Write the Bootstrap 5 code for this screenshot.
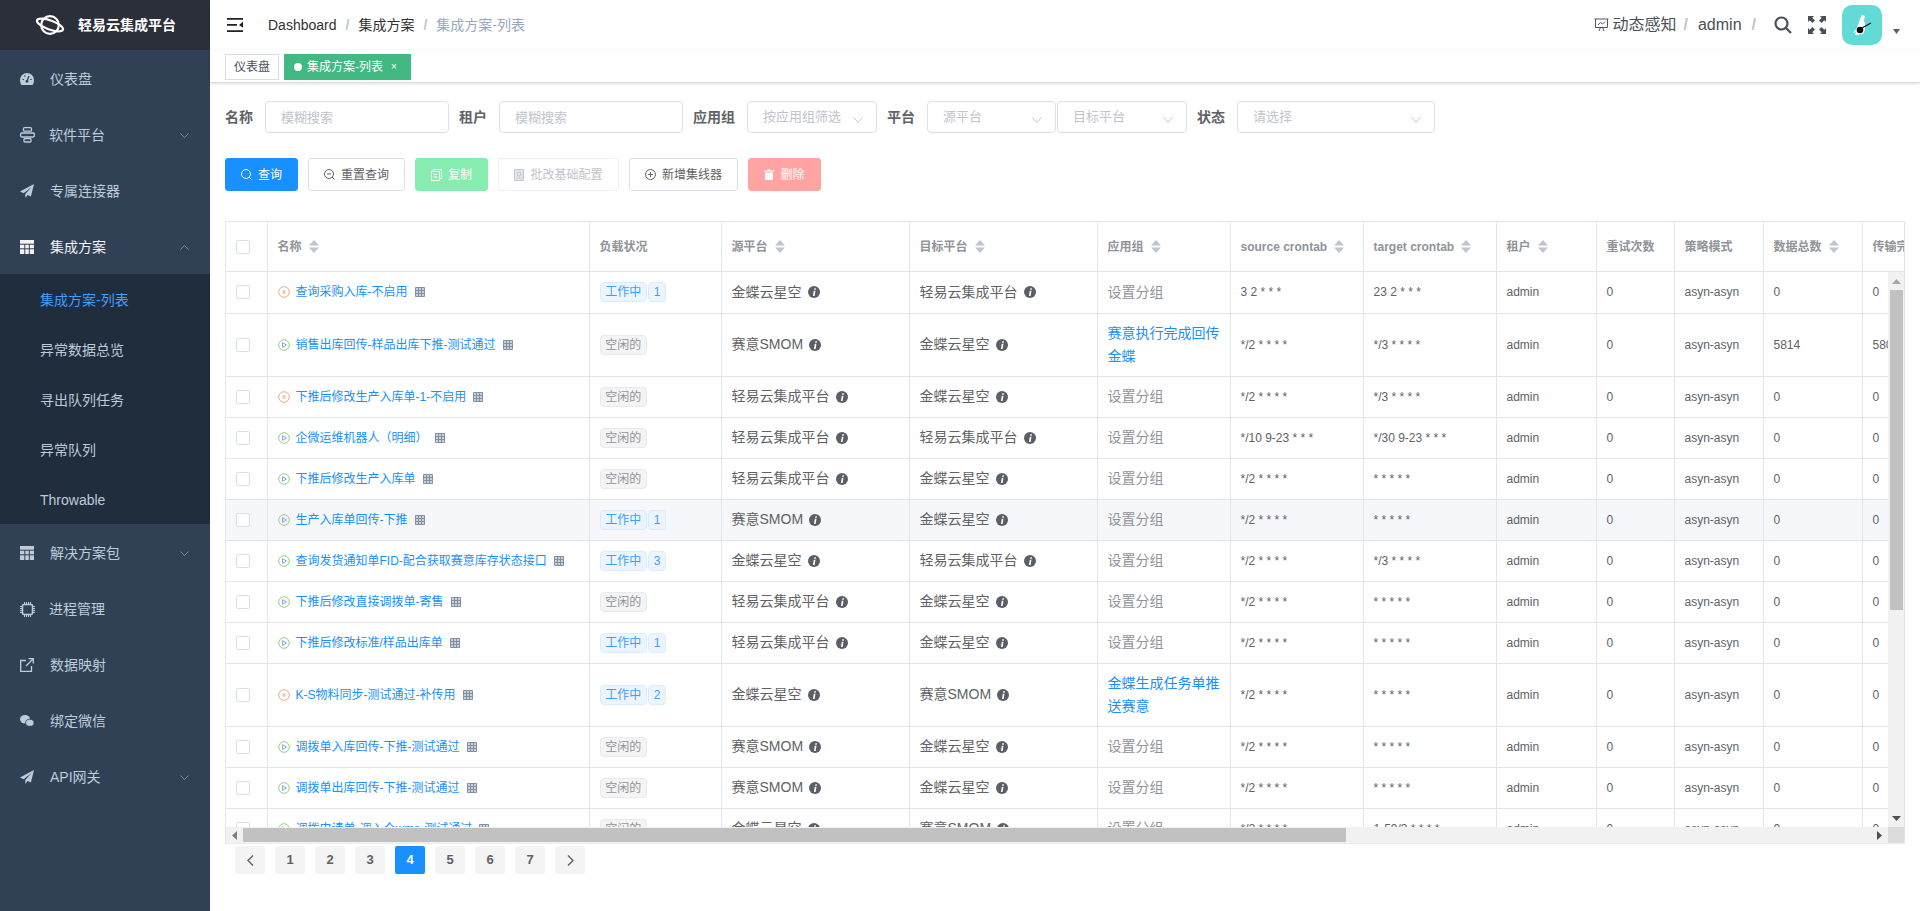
<!DOCTYPE html>
<html lang="zh-CN">
<head>
<meta charset="utf-8">
<title>集成方案-列表</title>
<link rel="stylesheet" href="https://cdn.jsdelivr.net/npm/bootstrap@5.3.0/dist/css/bootstrap.min.css">
<style>
html,body{height:911px;overflow:hidden}
body{font-family:"Liberation Sans","Noto Sans CJK SC",sans-serif;font-size:14px;color:#606266;background:#fff}
svg{display:block;flex:none}
.side-nav{width:210px;height:911px;background:#304156;color:#bfcbd9;flex:none}
.brand-bar{height:50px;background:#2b2f3a;color:#fff;font-weight:700;padding-left:35px;gap:13px}
.side-link{height:56px;padding:2px 21px 0 20px;color:#bfcbd9;gap:16px;text-decoration:none;font-size:14px}
.side-link.on{color:#f4f4f5}
.side-link.tight{gap:14px}
.side-link .ms-auto{color:#8391a3}
.side-sub{background:#1f2d3d}
.side-sublink{height:50px;padding:2px 0 0 40px;color:#bfcbd9;font-size:14px;text-decoration:none}
.side-sublink.on{color:#409eff}
.top-bar{height:50px;padding:0 20px 0 17px;background:#fff;box-shadow:0 1px 4px rgba(0,21,41,.06);position:relative}
.crumbs{--bs-breadcrumb-margin-bottom:0;--bs-breadcrumb-divider-color:#c0c4cc;--bs-breadcrumb-item-active-color:#97a8be;--bs-breadcrumb-item-padding-x:9px;margin-left:25px;font-size:14px}
.crumbs .breadcrumb-item{color:#303133}
.crumbs .breadcrumb-item.active{color:#97a8be}
.crumbs .breadcrumb-item+.breadcrumb-item::before{font-weight:700}
.top-text{font-size:16px;color:#4a4f57}
.top-sep{font-size:16px;color:#c0c4cc;font-weight:700;margin:0 10px}
.top-sep.near{margin-left:7px}
.avatar-box{width:40px;height:40px;border-radius:10px;background:#62dbd6;margin-left:16px}
.tab-bar{height:33px;padding:4px 15px 0;gap:5px;background:#fff;border-bottom:1px solid #d8dce5;box-shadow:0 1px 3px rgba(0,0,0,.12);align-items:flex-start;position:relative}
.view-tab{height:26px;font-size:12px;border:1px solid #d8dce5;color:#495060;padding:0 8px;background:#fff}
.view-tab.on{background:#42b983;border-color:#42b983;color:#fff;width:127px;padding:0}
.tab-dot{width:8px;height:8px;border-radius:50%;background:#fff;margin:0 5px 0 9px}
.tab-x{font-size:10px;margin-left:8px;line-height:1}
.filter-row{padding:18px 15px 0 15px}
.field-label{font-size:14px;font-weight:700;color:#606266;margin-right:12px;white-space:nowrap}
.field-box{height:32px;font-size:13px;border:1px solid #dcdfe6;border-radius:4px;padding:0 30px 0 15px;margin-right:10px;color:#c0c4cc;box-shadow:none;background-color:#fff;flex:none}
.field-box::placeholder{color:#c0c4cc}
select.field-box{background-image:url("data:image/svg+xml,%3Csvg xmlns='http://www.w3.org/2000/svg' width='10' height='6' viewBox='0 0 10 6'%3E%3Cpath d='M.5.5 5 5.3 9.5.5' fill='none' stroke='%23c0c4cc'/%3E%3C/svg%3E");background-repeat:no-repeat;background-position:right 13px top 15px;background-size:10px 6px}
.w-a{width:184px}.w-b{width:130px}.w-c{width:198px}
.field-box.w-tight{width:129px;margin-right:1px}
.action-row{padding:25px 15px 0;gap:10px}
.act-btn{height:33px;font-size:12px;padding:0;border-radius:3px;gap:6px;border:1px solid #dcdfe6;background:#fff;color:#606266;flex:none}
.act-btn:hover{border-color:#dcdfe6;color:#606266;background:#fff}
.act-blue{width:73px;background:#1890ff;border-color:#1890ff;color:#fff}
.act-blue:hover{background:#1890ff;border-color:#1890ff;color:#fff}
.act-reset{width:97px}
.act-green{width:73px;background:#87ecb0;border-color:#87ecb0;color:#fff}
.act-green:hover{background:#87ecb0;border-color:#87ecb0;color:#fff}
.act-off{width:121px;color:#c0c4cc;border-color:#ebeef5}
.act-off:hover{color:#c0c4cc;border-color:#ebeef5}
.act-new{width:109px}
.act-red{width:73px;background:#ffa3a3;border-color:#ffa3a3;color:#fff}
.act-red:hover{background:#ffa3a3;border-color:#ffa3a3;color:#fff}
.grid-shell{margin:30px 15px 0;width:1680px;border:1px solid #dfe6ec;border-bottom-color:#e8ebef}
.grid-head{height:50px;overflow:hidden;border-bottom:1px solid #dfe6ec}
.grid-body{width:1662px;height:555px;overflow:hidden;flex:none}
.data-grid{table-layout:fixed;width:1782px;border-collapse:collapse;margin:0;--bs-table-bg:transparent;--bs-table-border-color:#dfe6ec;font-size:12px;color:#606266}
.data-grid th,.data-grid td{padding:0 10px;border:1px solid #dfe6ec;vertical-align:middle;white-space:nowrap;overflow:hidden;color:#606266}
.data-grid tr>:first-child{border-left:0;padding:0}
.data-grid th{height:49px;border-top:0;border-bottom:0;color:#909399;font-weight:700;font-size:12px}
.data-grid td{height:41.05px}
.data-grid tr.tall td{height:63px}
.data-grid tr:first-child td{border-top:0}
.data-grid tr.hot td{background:#f5f7fa}
.sort-wrap{gap:7px}
.check-box{width:14px;height:14px;border:1px solid #dcdfe6;border-radius:2px;background:#fff;margin-left:10px}
.name-link{color:#1890ff;gap:6px;text-decoration:none}
.name-link svg:last-child{margin-left:1px}
.state-chip{font-size:12px;font-weight:400;line-height:18px;height:20px;padding:0 4.75px;border-radius:4px;border:1px solid #d9ecff;background:#ecf5ff;color:#409eff;margin-right:1px}
.state-idle{background:#f4f4f5;border-color:#e9e9eb;color:#909399}
.cell-plat{font-size:14px;gap:6px}
.cell-group{font-size:14px;color:#909399!important}
.cell-group a{color:#1890ff;text-decoration:none;display:block;white-space:normal;line-height:23px}
.v-track{width:16px;height:555px;background:#f1f1f1;flex:none;padding:7px 0 6px}
.v-thumb{width:13px;height:320px;background:#c1c1c1;margin:6px 0 0 2px}
.h-track{height:16px;background:#f1f1f1}
.h-thumb{width:1103px;height:14px;background:#c1c1c1;margin-left:6px}
.h-corner{width:16px;height:16px;background:#dcdcdc}
.pager{--bs-pagination-border-width:0;margin:2px 0 0 25px;gap:10px}
.pager .page-link{width:30px;height:28px;padding:0;margin-left:0!important;background:#f4f4f5;color:#606266;font-size:13px;font-weight:700;border-radius:2px!important;display:flex;align-items:center;justify-content:center}
.pager .page-item.active .page-link{background:#1890ff;color:#fff}
</style>
</head>
<body class="d-flex">
<svg width="0" height="0" class="position-absolute">
<defs>
<symbol id="i-info" viewBox="0 0 12 12"><circle cx="6" cy="6" r="6" fill="#5a5e66"/><path d="M6.4 2.2h1.6l-.3 1.5H6.1zM5.8 4.8h1.7L6.6 9.9H4.9z" fill="#fff"/></symbol>
<symbol id="i-play" viewBox="0 0 12 12"><circle cx="6" cy="6" r="5.3" fill="none" stroke="#95ce7f"/><path d="M4.6 3.6 8.4 6 4.6 8.4z" fill="none" stroke="#7fa7d9"/></symbol>
<symbol id="i-stop" viewBox="0 0 12 12"><circle cx="6" cy="6" r="5.3" fill="none" stroke="#eda98a"/><path d="M4.5 4.2h3v3.6h-3z" fill="#f5c4ad"/></symbol>
<symbol id="i-grid" viewBox="0 0 10 10"><path d="M.5.5h9v9h-9zM.5 3.500h9M.5 6.500h9M3.500.5v9M6.500.5v9" fill="#c9d2dc" stroke="#8290a2"/></symbol>
<symbol id="i-sort" viewBox="0 0 10 13"><path d="M5 0l5 5.500H0zM0 7.500h10L5 13z" fill="#c0c4cc"/></symbol>
<symbol id="i-table" viewBox="0 0 14 14"><path d="M0 0h14v14H0z" fill="currentColor"/><path d="M0 4.200h14M0 8.800h14M4.800 4v10M9.300 4v10" stroke="#304156" fill="none"/></symbol>
<symbol id="i-plane" viewBox="0 0 14 14"><path d="M14 0 0 7.600l3.600 1.600L11.600 3 5.300 10v4l2.300-3 3.300 1.500z" fill="currentColor"/></symbol>
<symbol id="i-down" viewBox="0 0 9 5"><path d="M.4.4 4.500 4.500 8.600.4" fill="none" stroke="currentColor" stroke-width=".9"/></symbol>
<symbol id="i-up" viewBox="0 0 9 5"><path d="M.4 4.600 4.500.5l4.100 4.100" fill="none" stroke="currentColor" stroke-width=".9"/></symbol>
</defs>
</svg>

<aside class="side-nav">
  <div class="brand-bar d-flex align-items-center">
    <svg width="30" height="20" viewBox="0 0 30 20" fill="none" stroke="#fff" stroke-width="2.200"><circle cx="15" cy="10" r="8.800"/><ellipse cx="15" cy="10" rx="13.800" ry="4.500" transform="rotate(20 15 10)"/></svg>
    <span>轻易云集成平台</span>
  </div>
  <nav class="nav flex-column flex-nowrap">
    <a class="side-link d-flex align-items-center" href="#"><svg width="14" height="12" viewBox="0 0 14 12"><path d="M7 0a7 7 0 0 0-7 7c0 2 .6 3.600 1.500 5h11c.9-1.400 1.500-3 1.500-5a7 7 0 0 0-7-7z" fill="currentColor"/><path d="M7 8 9 3M2.500 6.500h1.500M10.200 6.500h1.500M4.500 2.500l.8 1.200" stroke="#304156" stroke-width="1.200"/><circle cx="7" cy="8.300" r="1.400" fill="#304156"/></svg><span>仪表盘</span></a>
    <a class="side-link tight d-flex align-items-center" href="#"><svg width="15" height="16" viewBox="0 0 15 16" fill="none" stroke="currentColor" stroke-width="1.300"><rect x="3.500" y=".7" width="8" height="3.500" rx="1"/><path d="M2 6h11c2 0 2 4 0 4H2c-2 0-2-4 0-4z"/><rect x="4" y="11.500" width="7" height="3.500" rx="1"/></svg><span>软件平台</span><svg class="ms-auto" width="9" height="5"><use href="#i-down"/></svg></a>
    <a class="side-link d-flex align-items-center" href="#"><svg width="14" height="14"><use href="#i-plane"/></svg><span>专属连接器</span></a>
    <a class="side-link on d-flex align-items-center" href="#"><svg width="14" height="14"><use href="#i-table"/></svg><span>集成方案</span><svg class="ms-auto" width="9" height="5"><use href="#i-up"/></svg></a>
    <div class="side-sub">
      <a class="side-sublink on d-flex align-items-center" href="#">集成方案-列表</a>
      <a class="side-sublink d-flex align-items-center" href="#">异常数据总览</a>
      <a class="side-sublink d-flex align-items-center" href="#">寻出队列任务</a>
      <a class="side-sublink d-flex align-items-center" href="#">异常队列</a>
      <a class="side-sublink d-flex align-items-center" href="#">Throwable</a>
    </div>
    <a class="side-link d-flex align-items-center" href="#"><svg width="14" height="14"><use href="#i-table"/></svg><span>解决方案包</span><svg class="ms-auto" width="9" height="5"><use href="#i-down"/></svg></a>
    <a class="side-link tight d-flex align-items-center" href="#"><svg width="15" height="15" viewBox="0 0 15 15" fill="none" stroke="currentColor"><rect x="2.500" y="2.500" width="10" height="10" rx="1.500" stroke-width="1.500"/><path d="M4.500 0v2M6.500 0v2M8.500 0v2M10.500 0v2M4.500 13v2M6.500 13v2M8.500 13v2M10.500 13v2M0 4.500h2M0 6.500h2M0 8.500h2M0 10.500h2M13 4.500h2M13 6.500h2M13 8.500h2M13 10.500h2"/></svg><span>进程管理</span></a>
    <a class="side-link d-flex align-items-center" href="#"><svg width="14" height="14" viewBox="0 0 14 14" fill="none" stroke="currentColor" stroke-width="1.300"><path d="M6 2.500H.7v10.800h10.800V8M6 8l7-7M8.500.7h4.800v4.800"/></svg><span>数据映射</span></a>
    <a class="side-link d-flex align-items-center" href="#"><svg width="14" height="12" viewBox="0 0 14 12" fill="currentColor"><ellipse cx="5" cy="4.300" rx="5" ry="4.200"/><ellipse cx="9.800" cy="7.800" rx="4.200" ry="3.500" stroke="#304156" stroke-width=".8"/></svg><span>绑定微信</span></a>
    <a class="side-link d-flex align-items-center" href="#"><svg width="14" height="14"><use href="#i-plane"/></svg><span>API网关</span><svg class="ms-auto" width="9" height="5"><use href="#i-down"/></svg></a>
  </nav>
</aside>

<main class="flex-grow-1" style="min-width:0">
  <header class="top-bar navbar flex-nowrap justify-content-start">
    <svg width="16" height="14" viewBox="0 0 16 14" fill="#222"><path d="M0 0h16v1.700H0zM0 12.300h16V14H0zM0 6h10v1.700H0zM16 3.800v6L12 6.900z"/></svg>
    <ol class="breadcrumb crumbs">
      <li class="breadcrumb-item">Dashboard</li>
      <li class="breadcrumb-item">集成方案</li>
      <li class="breadcrumb-item active">集成方案-列表</li>
    </ol>
    <div class="ms-auto d-flex align-items-center">
      <svg width="15" height="14" viewBox="0 0 15 14" fill="none" stroke="#555" class="me-1"><path d="M.5 1h14M1.500 1v8.500h12V1M5 13l1.500-3.500M10 13 8.500 9.500M4 7l2.500-2.500L8.500 6 11 3.500"/></svg>
      <span class="top-text">动态感知</span><span class="top-sep near">/</span><span class="top-text">admin</span><span class="top-sep">/</span>
      <svg width="18" height="18" viewBox="0 0 18 18" fill="none" stroke="#4a4f57" stroke-width="2.200" class="ms-2"><circle cx="7.500" cy="7.500" r="6"/><path d="m12 12 5 5"/></svg>
      <svg width="18" height="18" viewBox="0 0 18 18" fill="#4a4f57" style="margin-left:16px"><path d="M0 0h6L4.300 1.700 7 4.400 4.400 7 1.700 4.300 0 6zM18 0v6l-1.700-1.700L13.600 7 11 4.400l2.700-2.700L12 0zM0 18v-6l1.700 1.700L4.400 11 7 13.600l-2.700 2.700L6 18zM18 18h-6l1.700-1.700L11 13.600l2.600-2.600 2.700 2.700L18 12z"/></svg>
      <div class="avatar-box">
        <svg width="40" height="40" viewBox="0 0 40 40"><path d="M20 10l3 1-1 5c2 5 1 10-1 13l-8 1 1-3-3 1c4-4 6-10 7-14z" fill="#fff"/><circle cx="18" cy="25" r="3.300" fill="#111"/><path d="M20 23l9-5" stroke="#111" stroke-width="1.100"/></svg>
      </div>
      <svg width="7" height="5" viewBox="0 0 7 5" fill="#5a5e66" style="margin:13px 0 0 11px"><path d="M0 0h7L3.500 5z"/></svg>
    </div>
  </header>

  <div class="tab-bar d-flex">
    <div class="view-tab d-flex align-items-center">仪表盘</div>
    <div class="view-tab on d-flex align-items-center"><span class="tab-dot"></span>集成方案-列表<span class="tab-x">×</span></div>
  </div>

  <form class="filter-row d-flex align-items-center">
    <label class="field-label">名称</label><input class="form-control field-box w-a" placeholder="模糊搜索">
    <label class="field-label">租户</label><input class="form-control field-box w-a" placeholder="模糊搜索">
    <label class="field-label">应用组</label><select class="form-select field-box w-b"><option>按应用组筛选</option></select>
    <label class="field-label">平台</label><select class="form-select field-box w-tight"><option>源平台</option></select><select class="form-select field-box w-b"><option>目标平台</option></select>
    <label class="field-label">状态</label><select class="form-select field-box w-c"><option>请选择</option></select>
  </form>

  <div class="action-row d-flex">
    <button class="btn act-btn act-blue d-flex align-items-center justify-content-center"><svg width="11" height="11" viewBox="0 0 11 11" fill="none" stroke="#fff"><circle cx="5" cy="5" r="4.500"/><path d="m8 8 2.500 2.500"/></svg>查询</button>
    <button class="btn act-btn act-reset d-flex align-items-center justify-content-center"><svg width="11" height="11" viewBox="0 0 11 11" fill="none" stroke="#606266"><circle cx="5" cy="5" r="4.500"/><path d="m8 8 2.500 2.500M3 5h4"/></svg>重置查询</button>
    <button class="btn act-btn act-green d-flex align-items-center justify-content-center"><svg width="11" height="12" viewBox="0 0 11 12" fill="none" stroke="#fff"><path d="M2.500 2.500V.5h8v9h-2M.5 2.500h8v9h-8zM2.500 5.500h4M2.500 8h4"/></svg>复制</button>
    <button class="btn act-btn act-off d-flex align-items-center justify-content-center"><svg width="10" height="12" viewBox="0 0 10 12" fill="#e4e7ed" stroke="#c0c4cc"><path d="M.5.500h9v11h-9z"/><circle cx="5" cy="5" r="2"/><path d="M2.500 9h5"/></svg>批改基础配置</button>
    <button class="btn act-btn act-new d-flex align-items-center justify-content-center"><svg width="11" height="11" viewBox="0 0 11 11" fill="none" stroke="#606266"><circle cx="5.500" cy="5.500" r="5"/><path d="M5.500 3v5M3 5.500h5"/></svg>新增集线器</button>
    <button class="btn act-btn act-red d-flex align-items-center justify-content-center"><svg width="10" height="11" viewBox="0 0 10 11" fill="#fff"><path d="M0 1.500h3.500V.5h3v1H10v1H0zM1 3.500h8V11H1z"/></svg>删除</button>
  </div>

  <div class="grid-shell">
    <div class="grid-head">
      <table class="table data-grid">
        <colgroup><col style="width:41px"><col style="width:322px"><col style="width:132px"><col style="width:188px"><col style="width:188px"><col style="width:133px"><col style="width:133px"><col style="width:133px"><col style="width:100px"><col style="width:78px"><col style="width:89px"><col style="width:99px"><col style="width:146px"></colgroup>
        <thead><tr>
          <th><div class="check-box"></div></th>
          <th><div class="sort-wrap d-flex align-items-center">名称<svg width="10" height="13"><use href="#i-sort"/></svg></div></th>
          <th>负载状况</th>
          <th><div class="sort-wrap d-flex align-items-center">源平台<svg width="10" height="13"><use href="#i-sort"/></svg></div></th>
          <th><div class="sort-wrap d-flex align-items-center">目标平台<svg width="10" height="13"><use href="#i-sort"/></svg></div></th>
          <th><div class="sort-wrap d-flex align-items-center">应用组<svg width="10" height="13"><use href="#i-sort"/></svg></div></th>
          <th><div class="sort-wrap d-flex align-items-center">source crontab<svg width="10" height="13"><use href="#i-sort"/></svg></div></th>
          <th><div class="sort-wrap d-flex align-items-center">target crontab<svg width="10" height="13"><use href="#i-sort"/></svg></div></th>
          <th><div class="sort-wrap d-flex align-items-center">租户<svg width="10" height="13"><use href="#i-sort"/></svg></div></th>
          <th>重试次数</th>
          <th>策略模式</th>
          <th><div class="sort-wrap d-flex align-items-center">数据总数<svg width="10" height="13"><use href="#i-sort"/></svg></div></th>
          <th>传输完成数</th>
        </tr></thead>
      </table>
    </div>
    <div class="d-flex">
      <div class="grid-body">
        <table class="table data-grid">
          <colgroup><col style="width:41px"><col style="width:322px"><col style="width:132px"><col style="width:188px"><col style="width:188px"><col style="width:133px"><col style="width:133px"><col style="width:133px"><col style="width:100px"><col style="width:78px"><col style="width:89px"><col style="width:99px"><col style="width:146px"></colgroup>
          <tbody>
            <tr><td><div class="check-box"></div></td><td><a class="name-link d-flex align-items-center" href="#"><svg width="12" height="12"><use href="#i-stop"/></svg>查询采购入库-不启用<svg width="10" height="10"><use href="#i-grid"/></svg></a></td><td><span class="badge state-chip">工作中</span><span class="badge state-chip">1</span></td><td><div class="cell-plat d-flex align-items-center">金蝶云星空<svg width="12" height="12"><use href="#i-info"/></svg></div></td><td><div class="cell-plat d-flex align-items-center">轻易云集成平台<svg width="12" height="12"><use href="#i-info"/></svg></div></td><td class="cell-group">设置分组</td><td>3 2 * * *</td><td>23 2 * * *</td><td>admin</td><td>0</td><td>asyn-asyn</td><td>0</td><td>0</td></tr>
            <tr class="tall"><td><div class="check-box"></div></td><td><a class="name-link d-flex align-items-center" href="#"><svg width="12" height="12"><use href="#i-play"/></svg>销售出库回传-样品出库下推-测试通过<svg width="10" height="10"><use href="#i-grid"/></svg></a></td><td><span class="badge state-chip state-idle">空闲的</span></td><td><div class="cell-plat d-flex align-items-center">赛意SMOM<svg width="12" height="12"><use href="#i-info"/></svg></div></td><td><div class="cell-plat d-flex align-items-center">金蝶云星空<svg width="12" height="12"><use href="#i-info"/></svg></div></td><td class="cell-group"><a href="#">赛意执行完成回传金蝶</a></td><td>*/2 * * * *</td><td>*/3 * * * *</td><td>admin</td><td>0</td><td>asyn-asyn</td><td>5814</td><td>5806</td></tr>
            <tr><td><div class="check-box"></div></td><td><a class="name-link d-flex align-items-center" href="#"><svg width="12" height="12"><use href="#i-stop"/></svg>下推后修改生产入库单-1-不启用<svg width="10" height="10"><use href="#i-grid"/></svg></a></td><td><span class="badge state-chip state-idle">空闲的</span></td><td><div class="cell-plat d-flex align-items-center">轻易云集成平台<svg width="12" height="12"><use href="#i-info"/></svg></div></td><td><div class="cell-plat d-flex align-items-center">金蝶云星空<svg width="12" height="12"><use href="#i-info"/></svg></div></td><td class="cell-group">设置分组</td><td>*/2 * * * *</td><td>*/3 * * * *</td><td>admin</td><td>0</td><td>asyn-asyn</td><td>0</td><td>0</td></tr>
            <tr><td><div class="check-box"></div></td><td><a class="name-link d-flex align-items-center" href="#"><svg width="12" height="12"><use href="#i-play"/></svg>企微运维机器人（明细）<svg width="10" height="10"><use href="#i-grid"/></svg></a></td><td><span class="badge state-chip state-idle">空闲的</span></td><td><div class="cell-plat d-flex align-items-center">轻易云集成平台<svg width="12" height="12"><use href="#i-info"/></svg></div></td><td><div class="cell-plat d-flex align-items-center">轻易云集成平台<svg width="12" height="12"><use href="#i-info"/></svg></div></td><td class="cell-group">设置分组</td><td>*/10 9-23 * * *</td><td>*/30 9-23 * * *</td><td>admin</td><td>0</td><td>asyn-asyn</td><td>0</td><td>0</td></tr>
            <tr><td><div class="check-box"></div></td><td><a class="name-link d-flex align-items-center" href="#"><svg width="12" height="12"><use href="#i-play"/></svg>下推后修改生产入库单<svg width="10" height="10"><use href="#i-grid"/></svg></a></td><td><span class="badge state-chip state-idle">空闲的</span></td><td><div class="cell-plat d-flex align-items-center">轻易云集成平台<svg width="12" height="12"><use href="#i-info"/></svg></div></td><td><div class="cell-plat d-flex align-items-center">金蝶云星空<svg width="12" height="12"><use href="#i-info"/></svg></div></td><td class="cell-group">设置分组</td><td>*/2 * * * *</td><td>* * * * *</td><td>admin</td><td>0</td><td>asyn-asyn</td><td>0</td><td>0</td></tr>
            <tr class="hot"><td><div class="check-box"></div></td><td><a class="name-link d-flex align-items-center" href="#"><svg width="12" height="12"><use href="#i-play"/></svg>生产入库单回传-下推<svg width="10" height="10"><use href="#i-grid"/></svg></a></td><td><span class="badge state-chip">工作中</span><span class="badge state-chip">1</span></td><td><div class="cell-plat d-flex align-items-center">赛意SMOM<svg width="12" height="12"><use href="#i-info"/></svg></div></td><td><div class="cell-plat d-flex align-items-center">金蝶云星空<svg width="12" height="12"><use href="#i-info"/></svg></div></td><td class="cell-group">设置分组</td><td>*/2 * * * *</td><td>* * * * *</td><td>admin</td><td>0</td><td>asyn-asyn</td><td>0</td><td>0</td></tr>
            <tr><td><div class="check-box"></div></td><td><a class="name-link d-flex align-items-center" href="#"><svg width="12" height="12"><use href="#i-play"/></svg>查询发货通知单FID-配合获取赛意库存状态接口<svg width="10" height="10"><use href="#i-grid"/></svg></a></td><td><span class="badge state-chip">工作中</span><span class="badge state-chip">3</span></td><td><div class="cell-plat d-flex align-items-center">金蝶云星空<svg width="12" height="12"><use href="#i-info"/></svg></div></td><td><div class="cell-plat d-flex align-items-center">轻易云集成平台<svg width="12" height="12"><use href="#i-info"/></svg></div></td><td class="cell-group">设置分组</td><td>*/2 * * * *</td><td>*/3 * * * *</td><td>admin</td><td>0</td><td>asyn-asyn</td><td>0</td><td>0</td></tr>
            <tr><td><div class="check-box"></div></td><td><a class="name-link d-flex align-items-center" href="#"><svg width="12" height="12"><use href="#i-play"/></svg>下推后修改直接调拨单-寄售<svg width="10" height="10"><use href="#i-grid"/></svg></a></td><td><span class="badge state-chip state-idle">空闲的</span></td><td><div class="cell-plat d-flex align-items-center">轻易云集成平台<svg width="12" height="12"><use href="#i-info"/></svg></div></td><td><div class="cell-plat d-flex align-items-center">金蝶云星空<svg width="12" height="12"><use href="#i-info"/></svg></div></td><td class="cell-group">设置分组</td><td>*/2 * * * *</td><td>* * * * *</td><td>admin</td><td>0</td><td>asyn-asyn</td><td>0</td><td>0</td></tr>
            <tr><td><div class="check-box"></div></td><td><a class="name-link d-flex align-items-center" href="#"><svg width="12" height="12"><use href="#i-play"/></svg>下推后修改标准/样品出库单<svg width="10" height="10"><use href="#i-grid"/></svg></a></td><td><span class="badge state-chip">工作中</span><span class="badge state-chip">1</span></td><td><div class="cell-plat d-flex align-items-center">轻易云集成平台<svg width="12" height="12"><use href="#i-info"/></svg></div></td><td><div class="cell-plat d-flex align-items-center">金蝶云星空<svg width="12" height="12"><use href="#i-info"/></svg></div></td><td class="cell-group">设置分组</td><td>*/2 * * * *</td><td>* * * * *</td><td>admin</td><td>0</td><td>asyn-asyn</td><td>0</td><td>0</td></tr>
            <tr class="tall"><td><div class="check-box"></div></td><td><a class="name-link d-flex align-items-center" href="#"><svg width="12" height="12"><use href="#i-stop"/></svg>K-S物料同步-测试通过-补传用<svg width="10" height="10"><use href="#i-grid"/></svg></a></td><td><span class="badge state-chip">工作中</span><span class="badge state-chip">2</span></td><td><div class="cell-plat d-flex align-items-center">金蝶云星空<svg width="12" height="12"><use href="#i-info"/></svg></div></td><td><div class="cell-plat d-flex align-items-center">赛意SMOM<svg width="12" height="12"><use href="#i-info"/></svg></div></td><td class="cell-group"><a href="#">金蝶生成任务单推送赛意</a></td><td>*/2 * * * *</td><td>* * * * *</td><td>admin</td><td>0</td><td>asyn-asyn</td><td>0</td><td>0</td></tr>
            <tr><td><div class="check-box"></div></td><td><a class="name-link d-flex align-items-center" href="#"><svg width="12" height="12"><use href="#i-play"/></svg>调拨单入库回传-下推-测试通过<svg width="10" height="10"><use href="#i-grid"/></svg></a></td><td><span class="badge state-chip state-idle">空闲的</span></td><td><div class="cell-plat d-flex align-items-center">赛意SMOM<svg width="12" height="12"><use href="#i-info"/></svg></div></td><td><div class="cell-plat d-flex align-items-center">金蝶云星空<svg width="12" height="12"><use href="#i-info"/></svg></div></td><td class="cell-group">设置分组</td><td>*/2 * * * *</td><td>* * * * *</td><td>admin</td><td>0</td><td>asyn-asyn</td><td>0</td><td>0</td></tr>
            <tr><td><div class="check-box"></div></td><td><a class="name-link d-flex align-items-center" href="#"><svg width="12" height="12"><use href="#i-play"/></svg>调拨单出库回传-下推-测试通过<svg width="10" height="10"><use href="#i-grid"/></svg></a></td><td><span class="badge state-chip state-idle">空闲的</span></td><td><div class="cell-plat d-flex align-items-center">赛意SMOM<svg width="12" height="12"><use href="#i-info"/></svg></div></td><td><div class="cell-plat d-flex align-items-center">金蝶云星空<svg width="12" height="12"><use href="#i-info"/></svg></div></td><td class="cell-group">设置分组</td><td>*/2 * * * *</td><td>* * * * *</td><td>admin</td><td>0</td><td>asyn-asyn</td><td>0</td><td>0</td></tr>
            <tr><td><div class="check-box"></div></td><td><a class="name-link d-flex align-items-center" href="#"><svg width="12" height="12"><use href="#i-play"/></svg>调拨申请单-调入仓wms-测试通过<svg width="10" height="10"><use href="#i-grid"/></svg></a></td><td><span class="badge state-chip state-idle">空闲的</span></td><td><div class="cell-plat d-flex align-items-center">金蝶云星空<svg width="12" height="12"><use href="#i-info"/></svg></div></td><td><div class="cell-plat d-flex align-items-center">赛意SMOM<svg width="12" height="12"><use href="#i-info"/></svg></div></td><td class="cell-group">设置分组</td><td>*/2 * * * *</td><td>1-59/3 * * * *</td><td>admin</td><td>0</td><td>asyn-asyn</td><td>0</td><td>0</td></tr>
          </tbody>
        </table>
      </div>
      <div class="v-track d-flex flex-column">
        <svg width="9" height="5" viewBox="0 0 9 5" fill="#a8a8a8" class="mx-auto"><path d="M4.500 0 9 5H0z"/></svg>
        <div class="v-thumb"></div>
        <svg width="9" height="5" viewBox="0 0 9 5" fill="#505050" class="mx-auto mt-auto"><path d="M0 0h9L4.500 5z"/></svg>
      </div>
    </div>
    <div class="h-track d-flex align-items-center">
      <svg width="5" height="9" viewBox="0 0 5 9" fill="#808080" style="margin-left:6px"><path d="M5 0v9L0 4.500z"/></svg>
      <div class="h-thumb"></div>
      <svg width="5" height="9" viewBox="0 0 5 9" fill="#505050" class="ms-auto" style="margin-right:6px"><path d="M0 0v9l5-4.500z"/></svg>
      <div class="h-corner"></div>
    </div>
  </div>

  <ul class="pagination pager">
    <li class="page-item"><a class="page-link" href="#"><svg width="7" height="11" viewBox="0 0 7 11" fill="none" stroke="#606266" stroke-width="1.400"><path d="M6 .5 1 5.500l5 5"/></svg></a></li>
    <li class="page-item"><a class="page-link" href="#">1</a></li>
    <li class="page-item"><a class="page-link" href="#">2</a></li>
    <li class="page-item"><a class="page-link" href="#">3</a></li>
    <li class="page-item active"><a class="page-link" href="#">4</a></li>
    <li class="page-item"><a class="page-link" href="#">5</a></li>
    <li class="page-item"><a class="page-link" href="#">6</a></li>
    <li class="page-item"><a class="page-link" href="#">7</a></li>
    <li class="page-item"><a class="page-link" href="#"><svg width="7" height="11" viewBox="0 0 7 11" fill="none" stroke="#606266" stroke-width="1.400"><path d="m1 .5 5 5-5 5"/></svg></a></li>
  </ul>
</main>
<script src="https://cdn.jsdelivr.net/npm/bootstrap@5.3.0/dist/js/bootstrap.bundle.min.js"></script>
</body>
</html>
